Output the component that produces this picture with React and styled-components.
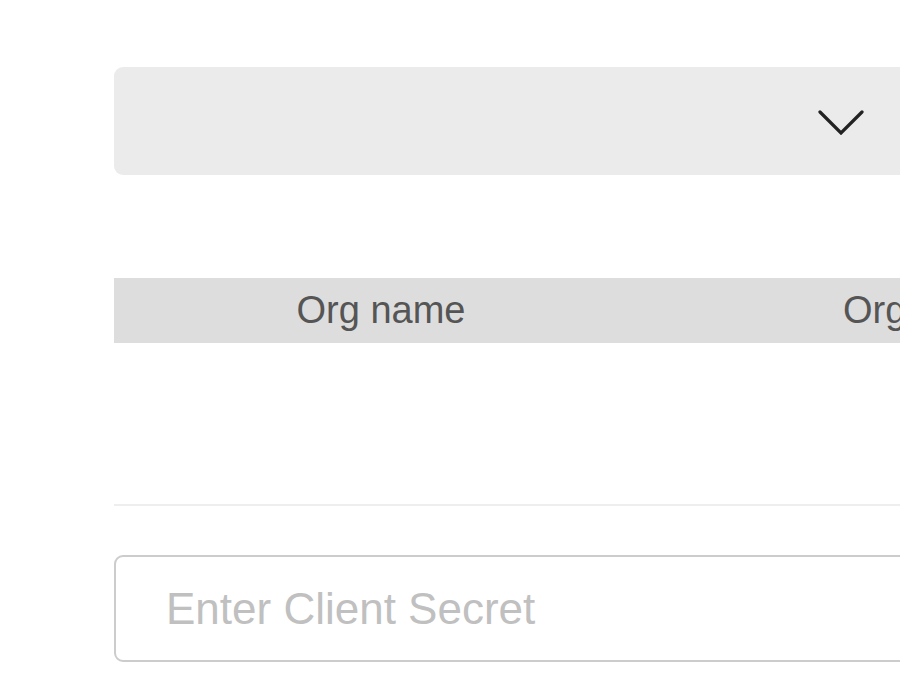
import React from 'react';
import styled, { createGlobalStyle } from 'styled-components';

const GlobalStyle = createGlobalStyle`
  html, body {
    margin: 0;
    padding: 0;
    background: #fff;
    overflow: hidden;
  }
  body {
    font-family: "Liberation Sans", Arial, sans-serif;
  }
`;

const Page = styled.div`
  width: 1500px;
  padding: 67px 0 0 114px;
  display: flex;
  flex-direction: column;
`;

const SelectBox = styled.div`
  height: 108px;
  background: #ebebeb;
  border-radius: 9px;
  display: flex;
  align-items: center;
  padding-left: 702px;
`;

const Table = styled.div`
  margin-top: 103px;
  display: flex;
  flex-direction: column;
`;

const HeaderRow = styled.div`
  display: grid;
  grid-template-columns: 534px 502px 534px;
  height: 65px;
  background: #dddddd;
  align-items: center;
`;

const HeaderCell = styled.div`
  text-align: center;
  font-size: 38px;
  color: #555;
  white-space: nowrap;
`;

const TableBody = styled.div`
  height: 161px;
  border-bottom: 2px solid #eeeeee;
`;

const SecretInput = styled.input`
  margin-top: 49px;
  height: 107px;
  box-sizing: border-box;
  border: 2px solid #cccccc;
  border-radius: 9px;
  padding: 0 0 0 50px;
  font-family: "Liberation Sans", Arial, sans-serif;
  font-size: 44px;
  color: #333;
  outline: none;
  &::placeholder {
    color: #c0c0c0;
  }
`;

const Chevron = () => (
  <svg width="48" height="28" viewBox="0 0 48 28" fill="none">
    <polyline points="4,5 25,26 46,5" stroke="#222" strokeWidth="3.2" strokeLinecap="round" strokeLinejoin="miter" />
  </svg>
);

export default function App() {
  return (
    <>
      <GlobalStyle />
      <Page>
        <SelectBox>
          <Chevron />
        </SelectBox>
        <Table>
          <HeaderRow>
            <HeaderCell>Org name</HeaderCell>
            <HeaderCell>Org ID</HeaderCell>
            <HeaderCell>Actions</HeaderCell>
          </HeaderRow>
          <TableBody />
        </Table>
        <SecretInput placeholder="Enter Client Secret" />
      </Page>
    </>
  );
}
